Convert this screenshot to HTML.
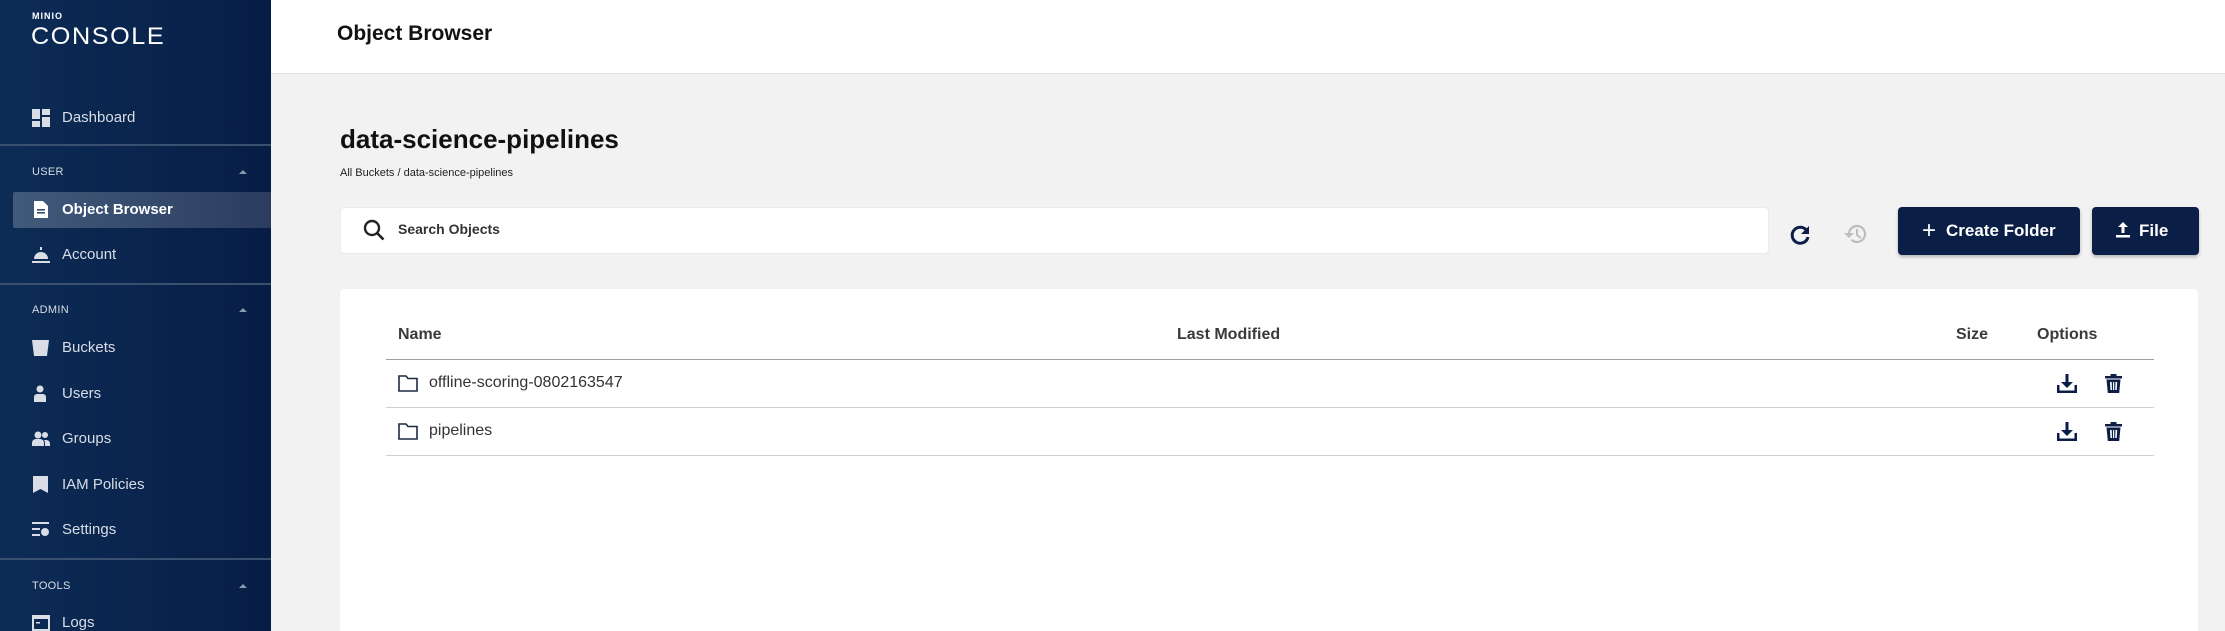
<!DOCTYPE html>
<html><head><meta charset="utf-8"><style>
*{margin:0;padding:0;box-sizing:border-box}
html,body{width:2225px;height:631px;overflow:hidden}
body{font-family:"Liberation Sans",sans-serif;background:#f2f2f2;position:relative}
.sb{position:absolute;left:0;top:0;width:271px;height:631px;background:linear-gradient(90deg,#0c2c56 0%,#081d45 100%);color:#d8dde6}
.abs{position:absolute}
.item{position:absolute;left:0;width:271px;height:36px;font-size:15px;color:#d8dde6}
.item .t{position:absolute;left:62px;top:9px}
.item svg{position:absolute;left:32px;top:9px}
.sec{position:absolute;left:32px;font-size:11px;color:#d8dde6;letter-spacing:.3px}
.caret{position:absolute;left:239px;width:0;height:0;border-left:4px solid transparent;border-right:4px solid transparent;border-bottom:4px solid #8a98b0}
.div{position:absolute;left:0;width:271px;height:2px;background:#3a5070}
.hdr{position:absolute;left:271px;top:0;width:1954px;height:74px;background:#fff;border-bottom:1px solid #e3e3e3}
.btn{position:absolute;top:207px;height:48px;background:#0b1e46;border-radius:4px;color:#fff;font-weight:bold;font-size:17px;box-shadow:0 2px 3px rgba(0,0,0,.25)}
.th{position:absolute;top:326px;font-size:16px;font-weight:bold;color:#3a3a3a}
</style></head><body>
<div class="sb">
  <div class="abs" style="left:32px;top:11px;font-size:9px;font-weight:bold;color:#fff;letter-spacing:1px">MINIO</div>
  <div class="abs" style="left:31px;top:24px;font-size:24px;line-height:26px;color:#fff;letter-spacing:1.5px;transform:scaleX(1.05);transform-origin:left">CONSOLE</div>

  <div class="item" style="top:100px"><svg width="18" height="18" viewBox="0 0 18 18" fill="#d8dde6"><rect x="0" y="0" width="8" height="10"/><rect x="10" y="0" width="8" height="6"/><rect x="0" y="12" width="8" height="6"/><rect x="10" y="8" width="8" height="10"/></svg><span class="t">Dashboard</span></div>
  <div class="div" style="top:144px"></div>
  <div class="sec" style="top:166px">USER</div><div class="caret" style="top:170px"></div>
  <div class="abs" style="left:13px;top:192px;width:258px;height:36px;background:linear-gradient(90deg,rgba(255,255,255,.22),rgba(255,255,255,.14));border-radius:2px 0 0 2px"></div>
  <div class="item" style="top:192px;color:#fff;font-weight:bold"><svg width="14" height="17" viewBox="0 0 14 17" fill="#fff" style="left:34px"><path d="M0 0h9l5 5v12H0z"/><rect x="3" y="8" width="8" height="1.6" fill="#3a5070"/><rect x="3" y="11" width="8" height="1.6" fill="#3a5070"/></svg><span class="t">Object Browser</span></div>
  <div class="item" style="top:237px"><svg width="18" height="18" viewBox="0 0 18 18" fill="#d8dde6"><rect x="8" y="1" width="2" height="3"/><path d="M2 13a7 7 0 0 1 14 0z"/><rect x="0" y="15" width="18" height="2"/></svg><span class="t">Account</span></div>
  <div class="div" style="top:283px"></div>
  <div class="sec" style="top:304px">ADMIN</div><div class="caret" style="top:308px"></div>
  <div class="item" style="top:330px"><svg width="18" height="18" viewBox="0 0 18 18" fill="#d8dde6"><path d="M0 1h17l-2 16H2z"/></svg><span class="t">Buckets</span></div>
  <div class="item" style="top:376px"><svg width="18" height="18" viewBox="0 0 18 18" fill="#d8dde6"><circle cx="8" cy="4" r="3.5"/><path d="M2 17v-5a3 3 0 0 1 3-3h6a3 3 0 0 1 3 3v5z"/></svg><span class="t">Users</span></div>
  <div class="item" style="top:421px"><svg width="18" height="18" viewBox="0 0 18 18" fill="#d8dde6"><circle cx="6" cy="5" r="3.5"/><circle cx="13" cy="5" r="3"/><path d="M0 16v-3a4 4 0 0 1 4-4h4a4 4 0 0 1 4 4v3z"/><path d="M13 16v-3a5 5 0 0 0-1-3h2a4 4 0 0 1 4 3v3z"/></svg><span class="t">Groups</span></div>
  <div class="item" style="top:467px"><svg width="18" height="18" viewBox="0 0 18 18" fill="#d8dde6"><path d="M1 0h15v17l-7.5-4L1 17z"/></svg><span class="t">IAM Policies</span></div>
  <div class="item" style="top:512px"><svg width="18" height="18" viewBox="0 0 18 18" fill="#d8dde6"><rect x="0" y="1" width="17" height="2"/><rect x="0" y="7" width="8" height="2"/><rect x="0" y="13" width="8" height="2"/><circle cx="13" cy="11" r="4"/></svg><span class="t">Settings</span></div>
  <div class="div" style="top:558px"></div>
  <div class="sec" style="top:580px">TOOLS</div><div class="caret" style="top:584px"></div>
  <div class="item" style="top:605px"><svg width="18" height="18" viewBox="0 0 18 18"><rect x="1" y="2" width="16" height="14" fill="none" stroke="#d8dde6" stroke-width="2"/><rect x="1" y="2" width="16" height="3" fill="#d8dde6"/><rect x="4" y="8" width="4" height="1.5" fill="#d8dde6"/></svg><span class="t">Logs</span></div>
</div>

<div class="hdr"><div class="abs" style="left:66px;top:22px;font-size:21px;font-weight:bold;color:#111">Object Browser</div></div>

<div class="abs" style="left:340px;top:124px;font-size:26px;font-weight:bold;color:#111">data-science-pipelines</div>
<div class="abs" style="left:340px;top:167px;font-size:11px;color:#222">All Buckets / data-science-pipelines</div>

<div class="abs" style="left:340px;top:207px;width:1429px;height:47px;background:#fff;border-radius:4px;border:1px solid #eaeaea"></div>
<svg class="abs" style="left:363px;top:219px" width="22" height="22" viewBox="0 0 22 22"><circle cx="9" cy="9" r="7" fill="none" stroke="#222" stroke-width="2.4"/><path d="M14 14l6.5 6.5" stroke="#222" stroke-width="2.6"/></svg>
<div class="abs" style="left:398px;top:221px;font-size:14px;font-weight:bold;color:#333">Search Objects</div>

<svg class="abs" style="left:1788px;top:223px" width="24" height="24" viewBox="0 0 24 24"><path d="M19 8A8 8 0 1 0 20 14" fill="none" stroke="#0b1e46" stroke-width="3"/><path d="M21 3v8h-8z" fill="#0b1e46"/></svg>
<svg class="abs" style="left:1843px;top:221px" width="26" height="26" viewBox="0 0 26 26"><path d="M6 13a8 8 0 1 1 2.5 5.8" fill="none" stroke="#bdbdbd" stroke-width="2.2"/><path d="M1 12h10l-5 5z" fill="#bdbdbd"/><path d="M14 8v6l4 3" fill="none" stroke="#bdbdbd" stroke-width="2"/></svg>

<div class="btn" style="left:1898px;width:182px"><span class="abs" style="left:24px;top:10px;font-size:24px;font-weight:normal">+</span><span class="abs" style="left:48px;top:14px">Create Folder</span></div>
<div class="btn" style="left:2092px;width:107px"><svg class="abs" style="left:24px;top:15px" width="14" height="16" viewBox="0 0 14 16" fill="#fff"><path d="M7 0l5 5H8.5v6h-3V5H2z"/><rect x="0" y="13" width="14" height="2.5"/></svg><span class="abs" style="left:47px;top:14px">File</span></div>

<div class="abs" style="left:340px;top:289px;width:1858px;height:342px;background:#fff;border-radius:4px 4px 0 0"></div>
<div class="th" style="left:398px">Name</div>
<div class="th" style="left:1177px">Last Modified</div>
<div class="th" style="left:1956px">Size</div>
<div class="th" style="left:2037px">Options</div>
<div class="abs" style="left:386px;top:359px;width:1768px;height:1px;background:#9e9e9e"></div>
<div class="abs" style="left:386px;top:407px;width:1768px;height:1px;background:#d0d0d0"></div>
<div class="abs" style="left:386px;top:455px;width:1768px;height:1px;background:#d0d0d0"></div>

<svg class="abs" style="left:398px;top:375px" width="20" height="17" viewBox="0 0 20 17"><path d="M1 1h7l2 2.5h9V16H1z" fill="none" stroke="#1e2a44" stroke-width="1.6"/></svg>
<div class="abs" style="left:429px;top:374px;font-size:16px;color:#333">offline-scoring-0802163547</div>
<svg class="abs" style="left:398px;top:423px" width="20" height="17" viewBox="0 0 20 17"><path d="M1 1h7l2 2.5h9V16H1z" fill="none" stroke="#1e2a44" stroke-width="1.6"/></svg>
<div class="abs" style="left:429px;top:422px;font-size:16px;color:#333">pipelines</div>

<svg class="abs" style="left:2057px;top:374px" width="20" height="19" viewBox="0 0 20 19" fill="#0b1e46"><rect x="8.5" y="0" width="3" height="9"/><path d="M4 8h12l-6 6z"/><path d="M0 11h2.5v5.5h15V11H20v8H0z"/></svg>
<svg class="abs" style="left:2105px;top:374px" width="17" height="19" viewBox="0 0 17 19" fill="#0b1e46"><rect x="0" y="2" width="17" height="2.5"/><rect x="5.5" y="0" width="6" height="2"/><path d="M1.5 5.5h14l-1.3 13.5H2.8zM5 8l.5 8h1.5l-.3-8zM8 8v8h1.2V8zM10.5 8l-.3 8h1.5l.5-8z" fill-rule="evenodd"/></svg>
<svg class="abs" style="left:2057px;top:422px" width="20" height="19" viewBox="0 0 20 19" fill="#0b1e46"><rect x="8.5" y="0" width="3" height="9"/><path d="M4 8h12l-6 6z"/><path d="M0 11h2.5v5.5h15V11H20v8H0z"/></svg>
<svg class="abs" style="left:2105px;top:422px" width="17" height="19" viewBox="0 0 17 19" fill="#0b1e46"><rect x="0" y="2" width="17" height="2.5"/><rect x="5.5" y="0" width="6" height="2"/><path d="M1.5 5.5h14l-1.3 13.5H2.8zM5 8l.5 8h1.5l-.3-8zM8 8v8h1.2V8zM10.5 8l-.3 8h1.5l.5-8z" fill-rule="evenodd"/></svg>
</body></html>
